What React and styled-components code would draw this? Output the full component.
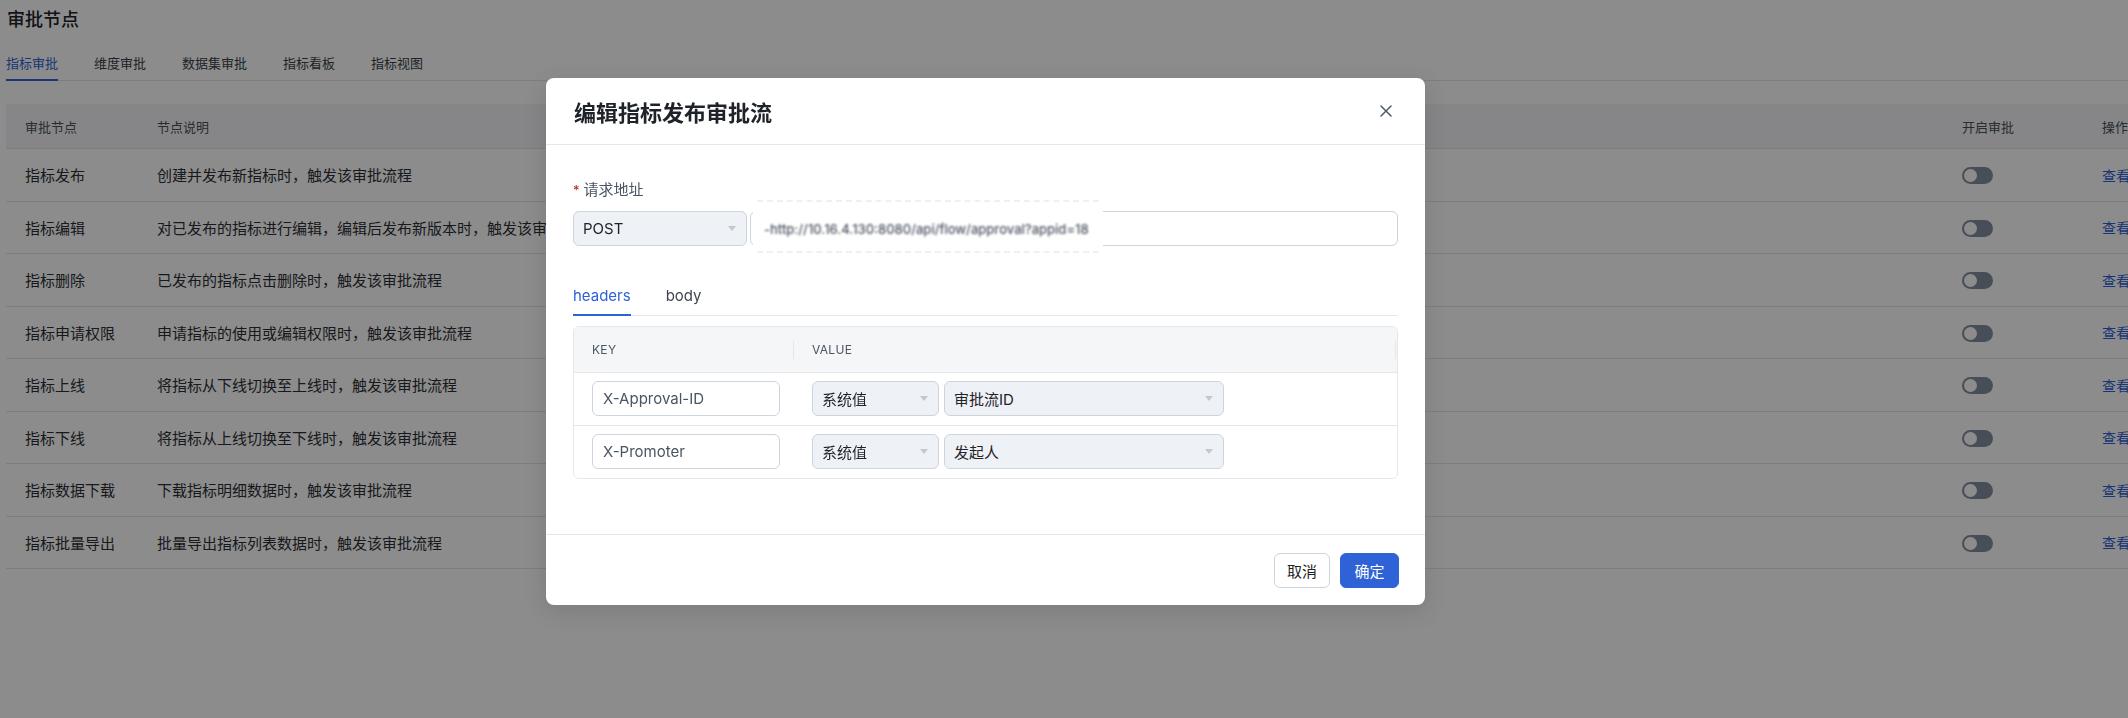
import React from "react";
import styled, { createGlobalStyle } from "styled-components";

const GlobalStyle = createGlobalStyle`
  html, body { margin: 0; padding: 0; }
  body {
    width: 2128px;
    height: 718px;
    overflow: hidden;
    background: #fff;
    font-family: Inter, "Noto Sans CJK SC", "Noto Sans", sans-serif;
    color: #1f2329;
  }
  * { box-sizing: border-box; }
`;

/* ---------- page behind the dialog ---------- */

const Page = styled.div`
  position: relative;
  width: 2128px;
  height: 718px;
  overflow: hidden;
  padding-left: 6px;
`;

const PageTitle = styled.h1`
  margin: 0;
  padding: 7px 0 0 1px;
  font-size: 18px;
  line-height: 26px;
  font-weight: 500;
  color: #1f2329;
`;

const TabBar = styled.div`
  display: flex;
  gap: 36px;
  margin-top: 10px;
  border-bottom: 1px solid #e5e6eb;
`;

const TabItem = styled.div`
  font-size: 13px;
  line-height: 20px;
  padding: 10px 0 6px;
  margin-bottom: -1px;
  border-bottom: 2px solid ${(p) => (p.$active ? "#2f62d6" : "transparent")};
  color: ${(p) => (p.$active ? "#2f62d6" : "#3a3f47")};
`;

const Table = styled.div`
  margin-top: 23px;
  width: 2197px;
`;

const Row = styled.div`
  display: grid;
  grid-template-columns: 132px 1805px 140px 120px;
  align-items: center;
  height: ${(p) => (p.$head ? "45px" : "52.5px")};
  background: ${(p) => (p.$head ? "#f4f5f7" : "transparent")};
  border-bottom: 1px solid #e3e4e8;
  font-size: ${(p) => (p.$head ? "13px" : "15px")};
  color: ${(p) => (p.$head ? "#4a4f57" : "#2b2f36")};
`;

const Cell = styled.div`
  padding-left: 19px;
  white-space: nowrap;
  overflow: hidden;
`;

const Switch = styled.span`
  display: inline-block;
  position: relative;
  width: 31px;
  height: 17px;
  border-radius: 9px;
  background: #848fa0;
  vertical-align: middle;
  &::after {
    content: "";
    position: absolute;
    left: 2px;
    top: 2px;
    width: 13px;
    height: 13px;
    border-radius: 50%;
    background: #fff;
  }
`;

const LinkText = styled.span`
  font-size: 14px;
  color: #2f62d6;
`;

const Overlay = styled.div`
  position: fixed;
  inset: 0;
  background: rgba(0, 0, 0, 0.45);
`;

/* ---------- dialog ---------- */

const Dialog = styled.div`
  position: absolute;
  left: 546px;
  top: 78px;
  width: 879px;
  background: #fff;
  border-radius: 8px;
  box-shadow: 0 6px 24px rgba(0, 0, 0, 0.12);
  display: flex;
  flex-direction: column;
`;

const DialogHeader = styled.div`
  height: 67px;
  padding: 0 27px 0 28px;
  display: flex;
  align-items: center;
  justify-content: space-between;
  border-bottom: 1px solid #e5e7eb;
`;

const DialogTitle = styled.h2`
  margin: 0;
  font-size: 22px;
  font-weight: 600;
  color: #1f2329;
`;

const CloseButton = styled.button`
  width: 24px;
  height: 24px;
  padding: 0;
  border: 0;
  background: none;
  display: flex;
  align-items: center;
  justify-content: center;
  cursor: pointer;
`;

const DialogBody = styled.div`
  padding: 35px 27px 55px;
`;

const FieldLabel = styled.div`
  font-size: 15px;
  line-height: 20px;
  color: #4b5563;
  display: flex;
  align-items: center;
  gap: 4px;
  margin-bottom: 11px;
  span {
    color: #b42318;
    font-size: 13px;
  }
`;

const RequestLine = styled.div`
  display: flex;
  gap: 3px;
`;

const SelectBox = styled.div`
  width: ${(p) => p.$w}px;
  height: 35px;
  flex-shrink: 0;
  padding: 0 10px 0 9px;
  display: flex;
  align-items: center;
  justify-content: space-between;
  background: #eef1f5;
  border: 1px solid #cdd4de;
  border-radius: 6px;
  font-size: 15px;
  color: #1f2329;
  white-space: nowrap;
`;

const UrlField = styled.div`
  position: relative;
  flex: 1;
  height: 35px;
  border: 1px solid #cdd4de;
  border-radius: 6px;
  background: #fff;
`;

/* masked address text that sits over the field */
const MaskedUrl = styled.div`
  position: absolute;
  left: 2px;
  top: -12px;
  width: 350px;
  height: 57px;
  background: #fff;
  display: flex;
  align-items: center;
  padding-left: 11px;
  &::before,
  &::after {
    content: "";
    position: absolute;
    left: 4px;
    right: 4px;
    height: 1px;
    border-top: 2px dashed #eef0f3;
    filter: blur(0.6px);
  }
  &::before { top: 0; }
  &::after { bottom: 3px; }
  span {
    font-size: 13px;
    font-weight: 500;
    color: #4f5663;
    white-space: nowrap;
    filter: blur(1.3px);
  }
`;

const SubTabs = styled.div`
  display: flex;
  gap: 35px;
  margin-top: 30px;
  border-bottom: 1px solid #e5e7eb;
`;

const SubTab = styled.div`
  font-size: 15px;
  line-height: 22px;
  padding: 9px 0 7px;
  margin-bottom: -1px;
  border-bottom: 2px solid ${(p) => (p.$active ? "#2f62d6" : "transparent")};
  color: ${(p) => (p.$active ? "#2f62d6" : "#3f4652")};
`;

const KvTable = styled.div`
  margin-top: 10px;
  border: 1px solid #e5e7eb;
  border-radius: 6px;
  overflow: hidden;
`;

const KvRow = styled.div`
  display: grid;
  grid-template-columns: 220px 1fr;
  align-items: center;
  height: ${(p) => (p.$head ? "46px" : "52.5px")};
  background: ${(p) => (p.$head ? "#f5f6f8" : "#fff")};
  border-bottom: ${(p) => (p.$last ? "0" : "1px solid #e5e7eb")};
`;

const KvHeadCell = styled.div`
  position: relative;
  height: 100%;
  display: flex;
  align-items: center;
  padding-left: 18px;
  font-size: 12px;
  letter-spacing: 0.3px;
  color: #4b5563;
  &::after {
    content: "";
    position: absolute;
    right: ${(p) => (p.$edge ? "1px" : "0")};
    top: 14px;
    width: 1px;
    height: 18px;
    background: #e3e6ea;
  }
`;

const KvCell = styled.div`
  padding-left: 18px;
  display: flex;
  gap: 5px;
`;

const TextInput = styled.div`
  width: 188px;
  height: 35px;
  padding: 0 10px;
  display: flex;
  align-items: center;
  border: 1px solid #cdd4de;
  border-radius: 6px;
  background: #fff;
  font-size: 15px;
  color: #4b5563;
`;

const DialogFooter = styled.div`
  height: 71px;
  border-top: 1px solid #e5e7eb;
  padding: 0 26px;
  display: flex;
  align-items: center;
  justify-content: flex-end;
  gap: 10px;
`;

const Button = styled.button`
  height: 35px;
  padding: 0 ${(p) => (p.$primary ? "13.5px" : "12px")};
  border-radius: 6px;
  font-family: inherit;
  font-size: 15px;
  border: 1px solid ${(p) => (p.$primary ? "#2f62d6" : "#cdd4de")};
  background: ${(p) => (p.$primary ? "#2f62d6" : "#fff")};
  color: ${(p) => (p.$primary ? "#fff" : "#1f2329")};
  cursor: pointer;
`;

const Caret = () => (
  <svg width="8" height="5" viewBox="0 0 8 5">
    <path d="M0 0h8L4 5z" fill="#c3c8d0" />
  </svg>
);

const CloseIcon = () => (
  <svg width="12" height="12" viewBox="0 0 12 12">
    <path d="M1 1l10 10M11 1L1 11" stroke="#4e5969" strokeWidth="1.5" strokeLinecap="round" />
  </svg>
);

const nodes = [
  ["指标发布", "创建并发布新指标时，触发该审批流程"],
  ["指标编辑", "对已发布的指标进行编辑，编辑后发布新版本时，触发该审批流程"],
  ["指标删除", "已发布的指标点击删除时，触发该审批流程"],
  ["指标申请权限", "申请指标的使用或编辑权限时，触发该审批流程"],
  ["指标上线", "将指标从下线切换至上线时，触发该审批流程"],
  ["指标下线", "将指标从上线切换至下线时，触发该审批流程"],
  ["指标数据下载", "下载指标明细数据时，触发该审批流程"],
  ["指标批量导出", "批量导出指标列表数据时，触发该审批流程"],
];

const headers = [
  ["X-Approval-ID", "审批流ID"],
  ["X-Promoter", "发起人"],
];

export default function App() {
  return (
    <>
      <GlobalStyle />
      <Page>
        <PageTitle>审批节点</PageTitle>
        <TabBar>
          <TabItem $active>指标审批</TabItem>
          <TabItem>维度审批</TabItem>
          <TabItem>数据集审批</TabItem>
          <TabItem>指标看板</TabItem>
          <TabItem>指标视图</TabItem>
        </TabBar>
        <Table>
          <Row $head>
            <Cell>审批节点</Cell>
            <Cell>节点说明</Cell>
            <Cell>开启审批</Cell>
            <Cell>操作</Cell>
          </Row>
          {nodes.map(([name, desc]) => (
            <Row key={name}>
              <Cell>{name}</Cell>
              <Cell>{desc}</Cell>
              <Cell>
                <Switch />
              </Cell>
              <Cell>
                <LinkText>查看</LinkText>
              </Cell>
            </Row>
          ))}
        </Table>

        <Overlay />

        <Dialog>
          <DialogHeader>
            <DialogTitle>编辑指标发布审批流</DialogTitle>
            <CloseButton aria-label="close">
              <CloseIcon />
            </CloseButton>
          </DialogHeader>
          <DialogBody>
            <FieldLabel>
              <span>*</span>请求地址
            </FieldLabel>
            <RequestLine>
              <SelectBox $w={174}>
                POST
                <Caret />
              </SelectBox>
              <UrlField>
                <MaskedUrl>
                  <span>-http://10.16.4.130:8080/api/flow/approval?appid=18</span>
                </MaskedUrl>
              </UrlField>
            </RequestLine>
            <SubTabs>
              <SubTab $active>headers</SubTab>
              <SubTab>body</SubTab>
            </SubTabs>
            <KvTable>
              <KvRow $head>
                <KvHeadCell>KEY</KvHeadCell>
                <KvHeadCell $edge>VALUE</KvHeadCell>
              </KvRow>
              {headers.map(([key, value], i) => (
                <KvRow key={key} $last={i === headers.length - 1}>
                  <KvCell>
                    <TextInput>{key}</TextInput>
                  </KvCell>
                  <KvCell>
                    <SelectBox $w={127}>
                      系统值
                      <Caret />
                    </SelectBox>
                    <SelectBox $w={280}>
                      {value}
                      <Caret />
                    </SelectBox>
                  </KvCell>
                </KvRow>
              ))}
            </KvTable>
          </DialogBody>
          <DialogFooter>
            <Button>取消</Button>
            <Button $primary>确定</Button>
          </DialogFooter>
        </Dialog>
      </Page>
    </>
  );
}
